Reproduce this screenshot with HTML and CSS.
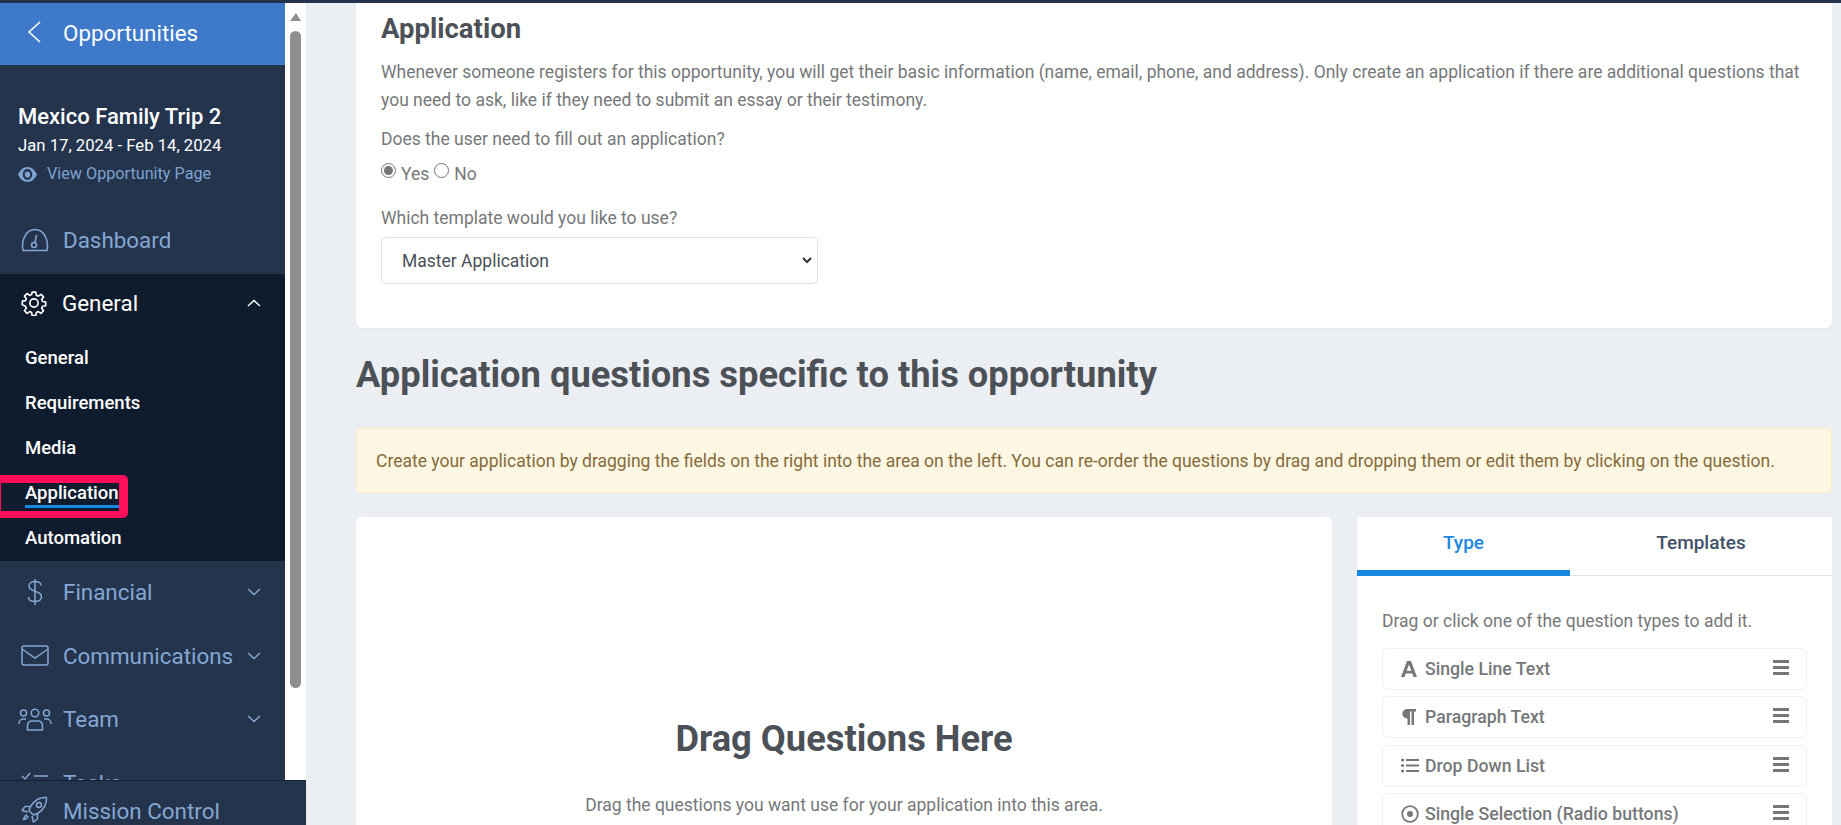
FILE: index.html
```html
<!DOCTYPE html>
<html lang="en">
<head>
    <meta charset="UTF-8">
    <title>Application</title>
    <link rel="stylesheet" href="styles.css">
</head>
<body>

<div class="top-line"></div>

<div class="layout">
    <aside class="sidebar">
        <div class="side-scroll">
            <a class="back-link">
                <svg class="back-icon" width="16" height="24" viewBox="0 0 16 24"><path d="M14 2 L3 12 L14 22" fill="none" stroke="#fff" stroke-width="1.6"/></svg>
                <span>Opportunities</span>
            </a>
            <div class="trip-info">
                <h2>Mexico Family Trip 2</h2>
                <p class="trip-dates">Jan 17, 2024 - Feb 14, 2024</p>
                <a class="trip-link">
                    <svg width="19" height="15" viewBox="0 0 19 13" preserveAspectRatio="none"><path d="M9.5 0C5.3 0 1.9 2.6 0 6.500 1.900 10.400 5.300 13 9.500 13s7.600-2.600 9.500-6.500C17.100 2.600 13.700 0 9.500 0zm0 11.200c-2.600 0-4.700-2.100-4.700-4.700s2.100-4.700 4.700-4.700 4.700 2.100 4.700 4.700-2.100 4.700-4.700 4.700zm0-7.400a2.700 2.700 0 1 0 0 5.400 2.700 2.700 0 0 0 0-5.400z" fill="#7fa3cf"/></svg>
                    <span>View Opportunity Page</span>
                </a>
            </div>

            <a class="nav-item nav-item-dash">
                <span class="nav-icon"><svg width="30" height="24" viewBox="0 0 30 24" fill="none" stroke="#84a7d3" stroke-width="1.500"><path d="M3 22.500 C1 12 6 1.500 15 1.500 S29 12 27 22.500 Z"/><circle cx="14" cy="17" r="2.500"/><path d="M15 14.500 L16.500 7"/></svg></span>
                <span class="nav-label">Dashboard</span>
            </a>

            <div class="nav-group">
                <a class="nav-item nav-item-open">
                    <span class="nav-icon"><svg width="26" height="26" viewBox="0 0 24 24" fill="none" stroke="#fff" stroke-width="1.500"><path d="M10.300 2h3.400l.5 2.900 1.800.8 2.400-1.700 2.400 2.400-1.700 2.400.8 1.800 2.900.5v3.400l-2.900.5-.8 1.800 1.700 2.400-2.400 2.400-2.400-1.700-1.800.8-.5 2.900h-3.400l-.5-2.900-1.800-.8-2.400 1.700-2.400-2.400 1.700-2.400-.8-1.800L1.200 13.700v-3.400l2.900-.5.800-1.800-1.700-2.400 2.400-2.400 2.400 1.700 1.800-.8z" stroke-linejoin="round"/><circle cx="12" cy="12" r="3.800"/></svg></span>
                    <span class="nav-label">General</span>
                    <svg class="chevron" width="14" height="8" viewBox="0 0 14 8"><path d="M1 7 L7 1.500 L13 7" fill="none" stroke="#fff" stroke-width="1.500"/></svg>
                </a>
                <a class="sub-item">General</a>
                <a class="sub-item">Requirements</a>
                <a class="sub-item">Media</a>
                <a class="sub-item sub-item-active"><span>Application</span><i class="callout"></i></a>
                <a class="sub-item">Automation</a>
            </div>

            <a class="nav-item">
                <span class="nav-icon"><svg width="18" height="28" viewBox="0 0 18 28" fill="none" stroke="#84a7d3" stroke-width="1.500"><path d="M15 7.500C15 5 12.500 3.500 9 3.500S3 5.500 3 8s2.500 4.200 6 5.200 6.500 2.600 6.500 5.600-3 4.800-6.500 4.800S2.500 22 2.500 19M9 1v26"/></svg></span>
                <span class="nav-label">Financial</span>
                <svg class="chevron" width="14" height="8" viewBox="0 0 14 8"><path d="M1 1 L7 6.500 L13 1" fill="none" stroke="#84a7d3" stroke-width="1.500"/></svg>
            </a>
            <a class="nav-item">
                <span class="nav-icon"><svg width="28" height="21" viewBox="0 0 28 21" fill="none" stroke="#84a7d3" stroke-width="1.500"><rect x="1" y="1" width="26" height="19" rx="2"/><path d="M1 4 L14 13 L27 4"/></svg></span>
                <span class="nav-label">Communications</span>
                <svg class="chevron" width="14" height="8" viewBox="0 0 14 8"><path d="M1 1 L7 6.500 L13 1" fill="none" stroke="#84a7d3" stroke-width="1.500"/></svg>
            </a>
            <a class="nav-item">
                <span class="nav-icon"><svg width="34" height="23" viewBox="0 0 34 23" fill="none" stroke="#84a7d3" stroke-width="1.500"><circle cx="17" cy="5" r="3.800"/><circle cx="5.500" cy="5" r="3"/><circle cx="28.500" cy="5" r="3"/><path d="M9.500 22v-4c0-3 2-5 5-5h5c3 0 5 2 5 5v4z"/><path d="M1 16c0-3 2-5 4-5h3M33 16c0-3-2-5-4-5h-3"/></svg></span>
                <span class="nav-label">Team</span>
                <svg class="chevron" width="14" height="8" viewBox="0 0 14 8"><path d="M1 1 L7 6.500 L13 1" fill="none" stroke="#84a7d3" stroke-width="1.500"/></svg>
            </a>
            <a class="nav-item">
                <span class="nav-icon"><svg width="28" height="22" viewBox="0 0 28 22" fill="none" stroke="#84a7d3" stroke-width="1.500"><path d="M1 4 L4 7 L9 1M13 4h14M13 12h14M13 20h14"/></svg></span>
                <span class="nav-label">Tasks</span>
            </a>
        </div>
        <div class="scrollbar">
            <i class="scroll-arrow"></i>
            <i class="scroll-thumb"></i>
        </div>
        <a class="mission-bar">
            <span class="nav-icon"><svg width="28" height="27" viewBox="0 0 28 27" fill="none" stroke="#84a7d3" stroke-width="1.500" stroke-linejoin="round"><path d="M25.500 1.500c-7-.5-12 2.500-16 9l-1.500 4 4.500 4.500 4-1.500c6.500-4 9.500-9 9-16z"/><circle cx="18" cy="9" r="2.500"/><path d="M9.500 10.500H4L1 14.500l6 1.500M16.500 17.500V23l-4 3-1.500-6M6 19c-2 .5-3 2-3.500 4.500 2.500-.5 4-1.500 4.500-3.500"/></svg></span>
            <span class="nav-label">Mission Control</span>
        </a>
    </aside>

    <main class="content">
        <section class="card top-card">
            <h3>Application</h3>
            <p class="intro">Whenever someone registers for this opportunity, you will get their basic information (name, email, phone, and address). Only create an application if there are additional questions that you need to ask, like if they need to submit an essay or their testimony.</p>
            <p class="field-label">Does the user need to fill out an application?</p>
            <div class="radio-row">
                <input type="radio" name="needs" checked><label>Yes</label>
                <input type="radio" name="needs"><label>No</label>
            </div>
            <p class="field-label template-label">Which template would you like to use?</p>
            <div class="select-box">
                <span>Master Application</span>
                <svg width="10" height="7" viewBox="0 0 10 7"><path d="M1 1 L5 5 L9 1" fill="none" stroke="#333" stroke-width="2"/></svg>
            </div>
        </section>

        <h1 class="page-title">Application questions specific to this opportunity</h1>

        <div class="notice">Create your application by dragging the fields on the right into the area on the left. You can re-order the questions by drag and dropping them or edit them by clicking on the question.</div>

        <div class="builder">
            <section class="card drop-area">
                <h2>Drag Questions Here</h2>
                <p>Drag the questions you want use for your application into this area.</p>
            </section>
            <section class="card type-panel">
                <div class="tabs">
                    <div class="tab tab-active">Type</div>
                    <div class="tab">Templates</div>
                </div>
                <div class="panel-body">
                    <p class="panel-hint">Drag or click one of the question types to add it.</p>
                    <div class="q-type">
                        <span class="q-icon"><svg width="16" height="16" viewBox="0 0 16 16"><path d="M0 16 L6 0 H10 L16 16 H12.500 L11.300 12.500 H4.700 L3.500 16 Z M5.700 9.700 H10.300 L8 3.500 Z" fill="#777" fill-rule="evenodd"/></svg></span>
                        <span class="q-label">Single Line Text</span>
                        <i class="q-handle"></i>
                    </div>
                    <div class="q-type">
                        <span class="q-icon"><svg width="15" height="16" viewBox="0 0 15 16"><path d="M6 0H15V2.500H13V16H10.500V2.500H9V16H6.500V9.500H6A4.750 4.750 0 0 1 6 0Z" fill="#777"/></svg></span>
                        <span class="q-label">Paragraph Text</span>
                        <i class="q-handle"></i>
                    </div>
                    <div class="q-type">
                        <span class="q-icon"><svg width="18" height="15" viewBox="0 0 18 15" fill="#777"><circle cx="1.600" cy="2" r="1.600"/><circle cx="1.600" cy="7.500" r="1.600"/><circle cx="1.600" cy="13" r="1.600"/><rect x="5" y="1" width="13" height="2"/><rect x="5" y="6.500" width="13" height="2"/><rect x="5" y="12" width="13" height="2"/></svg></span>
                        <span class="q-label">Drop Down List</span>
                        <i class="q-handle"></i>
                    </div>
                    <div class="q-type">
                        <span class="q-icon"><svg width="18" height="18" viewBox="0 0 18 18"><circle cx="9" cy="9" r="7.800" fill="none" stroke="#777" stroke-width="1.800"/><circle cx="9" cy="9" r="3" fill="#777"/></svg></span>
                        <span class="q-label">Single Selection (Radio buttons)</span>
                        <i class="q-handle"></i>
                    </div>
                </div>
            </section>
        </div>
    </main>
</div>

</body>
</html>
```

FILE: styles.css
```css
* {
    box-sizing: border-box;
}
html, body {
    height: 100%;
}
body {
    margin: 0;
    overflow: hidden;
    background-color: #ebeef2;
    font-family: Roboto, "Liberation Sans", sans-serif;
    color: #76787a;
}
h1, h2, h3, p {
    margin: 0;
}
.top-line {
    height: 3px;
    background-color: #24344d;
}
.layout {
    display: flex;
    height: 822px;
}

/* Sidebar */
.sidebar {
    position: relative;
    flex: 0 0 306px;
    height: 822px;
    background-color: #fff;
    overflow: hidden;
}
.side-scroll {
    width: 285px;
    height: 100%;
    overflow: hidden;
    background-color: #24344d;
}
.back-link {
    display: flex;
    align-items: center;
    height: 62px;
    padding: 0 0 2px 26px;
    background-color: #3e79ca;
    color: #fff;
    font-size: 22.400px;
}
.back-link span {
    margin-left: 21px;
}
.back-icon {
    margin-top: -2px;
}
.trip-info {
    padding: 38px 18px 0;
    height: 145px;
}
.trip-info h2 {
    color: #fff;
    font-size: 22px;
    font-weight: 500;
    line-height: 28px;
}
.trip-dates {
    margin-top: 3px;
    color: #fff;
    font-size: 16.700px;
    line-height: 24px;
}
.trip-link {
    display: flex;
    align-items: center;
    gap: 10px;
    margin-top: 4px;
    color: #7fa3cf;
    font-size: 16.200px;
    line-height: 24px;
}
.nav-item {
    display: flex;
    align-items: center;
    height: 63.500px;
    padding: 0 0 1px 18px;
    color: #84a7d3;
    font-size: 22.400px;
}
.nav-item-dash {
    height: 64px;
    padding-bottom: 4px;
}
.nav-icon {
    display: flex;
    justify-content: center;
    align-items: center;
    flex: 0 0 34px;
    margin-right: 11px;
}
.chevron {
    margin-left: auto;
    margin-right: 24px;
}
.nav-group {
    background-color: #0f1c2d;
    height: 287px;
}
.nav-item-open {
    height: 64px;
    padding: 0 0 6px 17px;
    color: #fff;
}
.nav-item-open .chevron {
    margin-right: 24px;
}
.sub-item {
    position: relative;
    display: block;
    width: fit-content;
    margin-left: 25px;
    height: 45px;
    color: #fff;
    font-size: 18.500px;
    font-weight: 500;
    line-height: 45px;
}
.sub-item:nth-child(2) {
    margin-top: -2px;
}
.sub-item-active span {
    display: block;
    height: 37px;
    line-height: 45px;
    border-bottom: 3px solid #1a88e2;
}
.callout {
    position: absolute;
    left: -32px;
    top: 4px;
    width: 135px;
    height: 43px;
    border: solid #ff0f5a;
    border-width: 8px 9px 7px 8px;
    border-radius: 5px;
}
.scrollbar {
    position: absolute;
    top: 0;
    left: 285px;
    width: 21px;
    height: 100%;
}
.scroll-arrow {
    position: absolute;
    top: 10px;
    left: 5px;
    border-left: 6px solid transparent;
    border-right: 5px solid transparent;
    border-bottom: 8px solid #8f8f8f;
}
.scroll-thumb {
    position: absolute;
    top: 28px;
    left: 5px;
    width: 11px;
    height: 657px;
    border-radius: 6px;
    background-color: #8f8f8f;
}
.mission-bar {
    position: absolute;
    left: 0;
    bottom: 0;
    display: flex;
    align-items: flex-start;
    width: 100%;
    height: 45px;
    padding: 15px 0 0 18px;
    background-color: #24344d;
    border-top: 1px solid #142135;
    color: #84a7d3;
    font-size: 22.400px;
    line-height: 30px;
}

/* Main */
.content {
    flex: 1;
    min-width: 0;
    padding: 0 9px 0 50px;
    overflow: hidden;
}
.card {
    background-color: #fff;
    border-radius: 6px;
}
.top-card {
    height: 325px;
    padding: 9px 25px 0;
    border-radius: 0 0 6px 6px;
    box-shadow: 0 1px 3px rgba(0,0,0,0.04);
}
.top-card h3 {
    color: #4c5157;
    font-size: 27.500px;
    font-weight: 700;
    line-height: 34px;
}
.intro {
    margin-top: 12px;
    font-size: 17.500px;
    line-height: 28px;
}
.field-label {
    margin-top: 11px;
    font-size: 17.500px;
    line-height: 28px;
}
.radio-row {
    display: flex;
    align-items: center;
    height: 28px;
    margin-top: 7px;
    font-size: 17.500px;
}
.radio-row input {
    width: 15px;
    height: 15px;
    margin: 0 5px 0 0;
    accent-color: #777;
    position: relative;
    top: -4px;
}
.radio-row label {
    margin-right: 5px;
}
.template-label {
    margin-top: 16px;
}
.select-box {
    display: flex;
    align-items: center;
    justify-content: space-between;
    width: 437px;
    height: 47px;
    margin-top: 5px;
    padding: 0 5px 0 20px;
    border: 1px solid #dee1e5;
    border-radius: 5px;
    color: #495057;
    font-size: 17.500px;
}
.page-title {
    margin-top: 25px;
    color: #4c5157;
    font-size: 36.300px;
    font-weight: 700;
    line-height: 44px;
}
.notice {
    display: flex;
    align-items: center;
    height: 65px;
    margin-top: 31px;
    padding-left: 19px;
    background-color: #fdf6e2;
    border: 1px solid #fbeecb;
    border-radius: 4px;
    color: #856b3a;
    font-size: 17.500px;
}
.builder {
    display: flex;
    gap: 25px;
    margin-top: 24px;
}
.drop-area {
    flex: 0 0 976px;
    height: 400px;
    padding-top: 200px;
    text-align: center;
}
.drop-area h2 {
    color: #4c5157;
    font-size: 36.300px;
    font-weight: 700;
    line-height: 44px;
}
.drop-area p {
    margin-top: 30px;
    font-size: 17.500px;
    line-height: 28px;
}
.type-panel {
    flex: 0 0 475px;
    height: 400px;
    border-radius: 0;
}
.tabs {
    display: flex;
    height: 59px;
    border-bottom: 1px solid #e2e4e7;
}
.tab {
    flex: 0 0 213px;
    height: 59px;
    color: #3f5166;
    font-size: 19px;
    font-weight: 500;
    line-height: 51px;
    text-align: center;
}
.tab + .tab {
    flex: 1;
}
.tab-active {
    color: #1a88e2;
    border-bottom: 6px solid #1a88e2;
}
.panel-body {
    padding: 31px 25px 0;
}
.panel-hint {
    font-size: 17.500px;
    line-height: 28px;
}
.q-type {
    display: flex;
    align-items: center;
    height: 42px;
    margin-bottom: 6.300px;
    padding: 0 17px 0 18px;
    border: 1px solid #eef0f3;
    border-radius: 5px;
    font-size: 17.700px;
    font-weight: 500;
}
.panel-hint + .q-type {
    margin-top: 13px;
}
.q-icon {
    display: flex;
    flex: 0 0 24px;
    align-items: center;
}
.q-label {
    flex: 1;
}
.q-handle {
    width: 16px;
    height: 15px;
    margin-top: -3px;
    border-top: 3px solid #777;
    border-bottom: 3px solid #777;
    position: relative;
}
.q-handle::after {
    content: "";
    position: absolute;
    left: 0;
    right: 0;
    top: 3px;
    height: 3px;
    background-color: #777;
}
```
